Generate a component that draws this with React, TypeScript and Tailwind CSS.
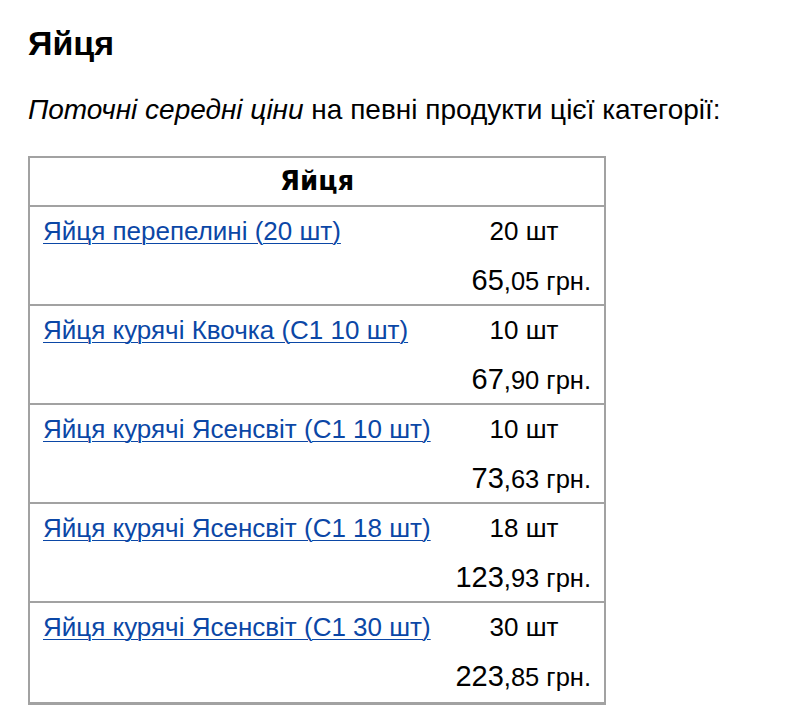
import React from "react";

const items = [
  { name: "Яйця перепелині (20 шт)", qty: "20 шт", int: "65", frac: ",05" },
  { name: "Яйця курячі Квочка (С1 10 шт)", qty: "10 шт", int: "67", frac: ",90" },
  { name: "Яйця курячі Ясенсвіт (С1 10 шт)", qty: "10 шт", int: "73", frac: ",63" },
  { name: "Яйця курячі Ясенсвіт (С1 18 шт)", qty: "18 шт", int: "123", frac: ",93" },
  { name: "Яйця курячі Ясенсвіт (С1 30 шт)", qty: "30 шт", int: "223", frac: ",85" },
];

export default function App() {
  return (
    <div className="bg-white min-h-[728px] w-[812px] pl-[28px] pt-[23px] text-black" style={{ fontFamily: '"Liberation Sans", Arial, sans-serif' }}>
      <h2 className="text-[34px] font-bold leading-[40px]">Яйця</h2>
      <p className="mt-[31px] text-[28px] leading-[32px]">
        <i>Поточні середні ціни</i> на певні продукти цієї категорії:
      </p>
      <div className="mt-[30px] w-[578px] border-2 border-b-[3px] border-[#a2a2a2]">
        <div className="h-[49px] flex items-center justify-center border-b-2 border-[#a2a2a2] text-[26px] font-bold" style={{ fontFamily: '"DejaVu Sans", Verdana, sans-serif' }}>
          Яйця
        </div>
        {items.map((it, i) => (
          <div key={i} className={`grid grid-cols-[1fr_160px] h-[99px] ${i < items.length - 1 ? "border-b-2 border-[#a2a2a2]" : ""}`}>
            <div className="pl-[13px] pt-[10px] text-[26px] leading-[28px]">
              <a href="#" className="text-[#0b47a6] underline underline-offset-[3px] decoration-1">{it.name}</a>
            </div>
            <div className="flex flex-col pr-[13px] pt-[10px] text-[26px] leading-[28px]">
              <div className="text-center pl-[13px]">{it.qty}</div>
              <div className="text-right mt-[21px] text-[29px]">
                {it.int}
                <span className="text-[25.5px]">{it.frac} грн.</span>
              </div>
            </div>
          </div>
        ))}
      </div>
    </div>
  );
}
